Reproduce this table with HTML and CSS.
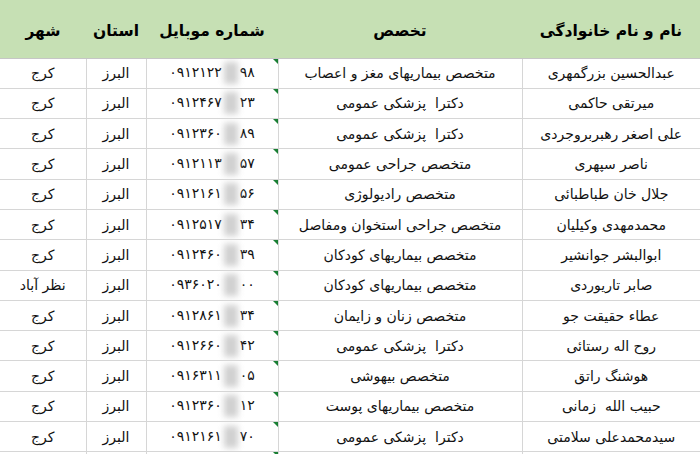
FILE: index.html
```html
<!DOCTYPE html>
<html lang="fa" dir="rtl">
<head>
<meta charset="utf-8">
<link rel="stylesheet" href="styles.css">
</head>
<body>
<table class="sheet">
  <colgroup>
    <col class="c-name"><col class="c-spec"><col class="c-phone"><col class="c-prov"><col class="c-city">
  </colgroup>
  <thead>
    <tr><th>نام و نام خانوادگی</th><th>تخصص</th><th>شماره موبایل</th><th>استان</th><th>شهر</th></tr>
  </thead>
  <tbody>
    <tr><td>عبدالحسین بزرگمهری</td><td>متخصص بیماریهای مغز و اعصاب</td><td class="phone"><span class="num">۰۹۱۲۱۲۲<span class="blur"></span>۹۸</span></td><td>البرز</td><td>کرج</td></tr>
    <tr><td>میرتقی حاکمی</td><td>دکترا&nbsp; پزشکی عمومی</td><td class="phone"><span class="num">۰۹۱۲۴۶۷<span class="blur"></span>۲۳</span></td><td>البرز</td><td>کرج</td></tr>
    <tr><td>علی اصغر رهبربروجردی</td><td>دکترا&nbsp; پزشکی عمومی</td><td class="phone"><span class="num">۰۹۱۲۳۶۰<span class="blur"></span>۸۹</span></td><td>البرز</td><td>کرج</td></tr>
    <tr><td>ناصر سپهری</td><td>متخصص جراحی عمومی</td><td class="phone"><span class="num">۰۹۱۲۱۱۳<span class="blur"></span>۵۷</span></td><td>البرز</td><td>کرج</td></tr>
    <tr><td>جلال خان طباطبائی</td><td>متخصص رادیولوژی</td><td class="phone"><span class="num">۰۹۱۲۱۶۱<span class="blur"></span>۵۶</span></td><td>البرز</td><td>کرج</td></tr>
    <tr><td>محمدمهدی وکیلیان</td><td>متخصص جراحی استخوان ومفاصل</td><td class="phone"><span class="num">۰۹۱۲۵۱۷<span class="blur"></span>۳۴</span></td><td>البرز</td><td>کرج</td></tr>
    <tr><td>ابوالبشر جوانشیر</td><td>متخصص بیماریهای کودکان</td><td class="phone"><span class="num">۰۹۱۲۴۶۰<span class="blur"></span>۳۹</span></td><td>البرز</td><td>کرج</td></tr>
    <tr><td>صابر تاریوردی</td><td>متخصص بیماریهای کودکان</td><td class="phone"><span class="num">۰۹۳۶۰۲۰<span class="blur"></span>۰۰</span></td><td>البرز</td><td>نظر آباد</td></tr>
    <tr><td>عطاء حقیقت جو</td><td>متخصص زنان و زایمان</td><td class="phone"><span class="num">۰۹۱۲۸۶۱<span class="blur"></span>۳۴</span></td><td>البرز</td><td>کرج</td></tr>
    <tr><td>روح اله رستائی</td><td>دکترا&nbsp; پزشکی عمومی</td><td class="phone"><span class="num">۰۹۱۲۶۶۰<span class="blur"></span>۴۲</span></td><td>البرز</td><td>کرج</td></tr>
    <tr><td>هوشنگ راتق</td><td>متخصص بیهوشی</td><td class="phone"><span class="num">۰۹۱۶۳۱۱<span class="blur"></span>۰۵</span></td><td>البرز</td><td>کرج</td></tr>
    <tr><td>حبیب الله&nbsp; زمانی</td><td>متخصص بیماریهای پوست</td><td class="phone"><span class="num">۰۹۱۲۳۶۰<span class="blur"></span>۱۲</span></td><td>البرز</td><td>کرج</td></tr>
    <tr><td>سیدمحمدعلی سلامتی</td><td>دکترا&nbsp; پزشکی عمومی</td><td class="phone"><span class="num">۰۹۱۲۱۶۱<span class="blur"></span>۷۰</span></td><td>البرز</td><td>کرج</td></tr>
    <tr><td></td><td></td><td class="phone"></td><td></td><td></td></tr>
  </tbody>
</table>
</body>
</html>
```

FILE: styles.css
```css
html, body {
  margin: 0;
  padding: 0;
  background: #ffffff;
  overflow: hidden;
  height: 454px;
}
body {
  font-family: "DejaVu Sans", sans-serif;
  color: #111;
}
.sheet {
  border-collapse: collapse;
  table-layout: fixed;
  width: 700px;
}
.c-name { width: 178px; }
.c-spec { width: 244px; }
.c-phone { width: 132px; }
.c-prov { width: 60px; }
.c-city { width: 86px; }

.sheet th {
  background: #c6e0b4;
  height: 58px;
  padding: 4px 0 0;
  font-size: 15.5px;
  font-weight: bold;
  color: #000;
  text-align: center;
  border-bottom: 1px solid #c6c6c6;
  box-sizing: border-box;
}
.sheet td {
  height: 30.3px;
  padding: 0;
  font-size: 14px;
  text-align: center;
  border: 1px solid #d6d6d6;
  box-sizing: border-box;
  white-space: nowrap;
  overflow: hidden;
}
.sheet tr td:first-child { border-right: none; }
.sheet tr td:last-child { border-left: none; }
.phone {
  position: relative;
  font-size: 13.5px;
}
.phone::after {
  content: "";
  position: absolute;
  top: 0;
  right: 0;
  border-top: 5px solid #1a7f34;
  border-left: 5px solid transparent;
}
.num {
  direction: ltr;
  unicode-bidi: isolate;
  display: inline-block;
}
.blur {
  display: inline-block;
  width: 14px;
  height: 22px;
  margin: 0 2px;
  vertical-align: middle;
  background: #d0d0d0;
  filter: blur(3px);
}
```
